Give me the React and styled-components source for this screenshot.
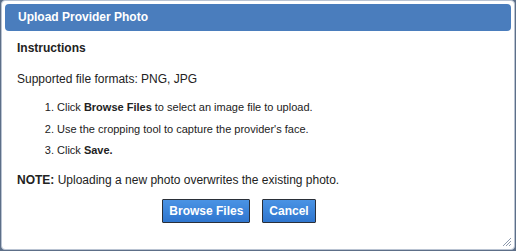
import styled, { createGlobalStyle } from 'styled-components'

const GlobalStyle = createGlobalStyle`
    html, body {
        margin: 0;
        padding: 0;
        background: #5d6f88;
        font-family: "Liberation Sans", Arial, sans-serif;
    }
`

const App = () => {
    return (
        <>
            <GlobalStyle />
            <Dialog>
                <TitleBar>Upload Provider Photo</TitleBar>
                <Content>
                    <Heading>Instructions</Heading>
                    <Text $gap={15}>Supported file formats: PNG, JPG</Text>
                    <Steps>
                        <li>Click <b>Browse Files</b> to select an image file to upload.</li>
                        <li>Use the cropping tool to capture the provider's face.</li>
                        <li>Click <b>Save.</b></li>
                    </Steps>
                    <Text $gap={10}><b>NOTE:</b> Uploading a new photo overwrites the existing photo.</Text>
                    <Buttons>
                        <Button>Browse Files</Button>
                        <Button>Cancel</Button>
                    </Buttons>
                </Content>
                <Grip width="10" height="10" viewBox="0 0 10 10">
                    <path d="M9 1L1 9M9 4L4 9M9 7L7 9" stroke="#8d9aae" strokeWidth="1" />
                </Grip>
            </Dialog>
        </>
    )
}

const Dialog = styled.div`
    position: relative;
    box-sizing: border-box;
    margin-left: 1px;
    width: 514px;
    height: 250px;
    background: white;
    border: 1px solid #b9c3d2;
    border-radius: 4px;
    padding: 3px;
    color: #222;
`
const TitleBar = styled.div`
    height: 27px;
    line-height: 27px;
    padding-left: 13px;
    background: #4a7dbd;
    border-radius: 4px;
    color: white;
    font-weight: bold;
    font-size: 12px;
`
const Content = styled.div`
    padding: 0 12px;
    font-size: 12px;
    line-height: 16px;
`
const Heading = styled.div`
    font-weight: bold;
    margin-top: 9px;
`
const Text = styled.div`
    margin-top: ${(p) => p.$gap ?? 14}px;
`
const Steps = styled.ol`
    margin: 10px 0 0;
    padding-left: 40px;
    font-size: 11px;
    li {
        line-height: 21.5px;
    }
`
const Buttons = styled.div`
    display: flex;
    justify-content: center;
    gap: 12px;
    margin-top: 11px;
    padding-right: 38px;
`
const Button = styled.button`
    font-family: inherit;
    font-size: 12px;
    font-weight: bold;
    color: white;
    height: 24px;
    padding: 0 6px;
    background: linear-gradient(#4a93e4, #2f76cf);
    border: 1px solid #2a2f38;
    border-radius: 1px;
    cursor: pointer;
`
const Grip = styled.svg`
    position: absolute;
    right: 2px;
    bottom: 2px;
`

export default App
